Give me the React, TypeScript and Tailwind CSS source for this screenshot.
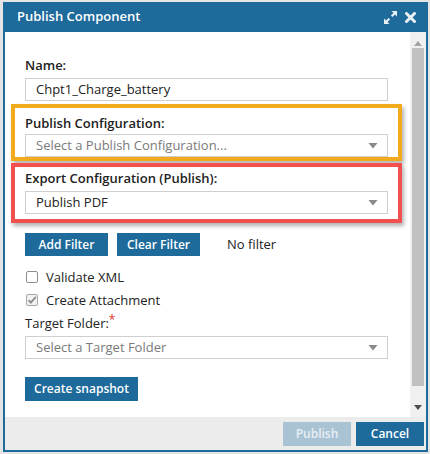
import React from "react"

const font = { fontFamily: '"Open Sans", "Liberation Sans", sans-serif' }

function Caret() {
	return (
		<svg width="10" height="6" viewBox="0 0 10 6" aria-hidden="true">
			<path d="M0.5 0h9L5 5.5z" fill="#8a8a8a" />
		</svg>
	)
}

function SelectBox({ text, placeholder }: { text: string; placeholder?: boolean }) {
	return (
		<div className="h-[23px] border border-[#cfcfcf] bg-white flex items-center justify-between pl-[10px] pr-[9px]">
			<span className={placeholder ? "text-[#7a7a7a]" : "text-[#222]"}>{text}</span>
			<Caret />
		</div>
	)
}

export default function App() {
	return (
		<div className="w-[430px] h-[454px] bg-[#e4e4e4] pl-[3px] pr-[2px] pt-[2px] pb-[2px] text-[13px]" style={font}>
			<div className="h-full flex flex-col border-2 border-t-0 border-[#1d6a9b] bg-white">
				{/* Title bar */}
				<div className="h-[30px] shrink-0 bg-[#1d6a9b] flex items-center justify-between pl-[14px] pr-[12px] -mx-[2px]">
					<span className="text-white font-semibold text-[13px]">Publish Component</span>
					<div className="flex items-center gap-[8px]">
						<svg width="13" height="13" viewBox="0 0 13 13" aria-hidden="true">
							<path d="M7.5 0H13v5.5l-2-2-2.6 2.6-1.5-1.5L9.5 2z M5.5 13H0V7.5l2 2 2.6-2.6 1.5 1.5L3.5 11z" fill="#e8f0f6" />
						</svg>
						<svg width="11" height="11" viewBox="0 0 11 11" aria-hidden="true">
							<path d="M1.5 1.5l8 8M9.5 1.5l-8 8" stroke="#e8f0f6" strokeWidth="3" strokeLinecap="round" />
						</svg>
					</div>
				</div>

				{/* Body */}
				<div className="flex h-[385px] shrink-0">
					<div className="flex-1 pl-[20px] pr-[22px] pt-[24px] text-[#222]">
						<div className="font-semibold leading-[18px]">Name:</div>
						<div className="mt-[4px] h-[23px] border border-[#cfcfcf] flex items-center pl-[10px] text-[#222]">
							Chpt1_Charge_battery
						</div>

						<div className="mt-[3px] -mx-[14px] px-[10px] pt-[6px] pb-0 border-4 border-[#f2ab1c] shadow-[2px_3px_4px_rgba(0,0,0,0.3)]">
							<div className="font-semibold leading-[18px]">Publish Configuration:</div>
							<div className="mt-[2px]">
								<SelectBox text="Select a Publish Configuration..." placeholder />
							</div>
						</div>

						<div className="mt-[2px] -mx-[14px] px-[10px] pt-[2px] pb-[5px] border-4 border-[#f1504f] shadow-[2px_3px_4px_rgba(0,0,0,0.3)]">
							<div className="font-semibold leading-[18px]">Export Configuration (Publish):</div>
							<div className="mt-[4px]">
								<SelectBox text="Publish PDF" />
							</div>
						</div>

						<div className="mt-[10px] flex items-center gap-[9px]">
							<button className="h-[23px] w-[83px] bg-[#1d6a9b] text-white text-[12px] font-semibold">Add Filter</button>
							<button className="h-[23px] w-[83px] bg-[#1d6a9b] text-white text-[12px] font-semibold">Clear Filter</button>
							<span className="ml-[18px] text-[#222]">No filter</span>
						</div>

						<div className="mt-[12px] flex items-center gap-[8px] leading-[18px]">
							<span className="ml-[1px] w-[12px] h-[12px] border border-[#8f8f8f] rounded-[2px] bg-white" />
							<span>Validate XML</span>
						</div>
						<div className="mt-[5px] flex items-center gap-[8px] leading-[18px]">
							<span className="ml-[1px] w-[12px] h-[12px] border border-[#a8a8a8] rounded-[2px] bg-[#f2f2f2] flex items-center justify-center">
								<svg width="10" height="10" viewBox="0 0 10 10" aria-hidden="true">
									<path d="M1.5 5.2l2.3 2.4L8.8 1.8" stroke="#8a8a8a" strokeWidth="1.8" fill="none" />
								</svg>
							</span>
							<span>Create Attachment</span>
						</div>
						<div className="mt-[5px] leading-[18px]">
							Target Folder:<span className="text-[#e0302f] align-top text-[12px] leading-[12px]">*</span>
						</div>
						<div className="mt-[4px]">
							<SelectBox text="Select a Target Folder" placeholder />
						</div>

						<div className="mt-[18px]">
							<button className="h-[24px] w-[113px] bg-[#1d6a9b] text-white text-[12px] font-semibold">Create snapshot</button>
						</div>
					</div>

					{/* Scrollbar */}
					<div className="w-[16px] bg-[#f0f0f0] flex flex-col items-center">
						<div className="h-[14px] flex items-end">
							<svg width="8" height="5" viewBox="0 0 8 5" aria-hidden="true">
								<path d="M0 5h8L4 0z" fill="#a3a3a3" />
							</svg>
						</div>
						<div className="mt-[2px] w-[12px] h-[338px] bg-[#c1c1c1]" />
						<div className="mt-[19px]">
							<svg width="8" height="5" viewBox="0 0 8 5" aria-hidden="true">
								<path d="M0 0h8L4 5z" fill="#505050" />
							</svg>
						</div>
					</div>
				</div>

				{/* Footer */}
				<div className="flex-1 bg-[#ececec] flex items-start justify-end gap-[5px] pt-[5px] pr-[2px]">
					<button className="h-[24px] w-[68px] bg-[#a9c3d5] text-[#e8eef3] text-[12px] font-semibold">Publish</button>
					<button className="h-[24px] w-[68px] bg-[#1d6a9b] text-white text-[12px] font-semibold">Cancel</button>
				</div>
			</div>
		</div>
	)
}
